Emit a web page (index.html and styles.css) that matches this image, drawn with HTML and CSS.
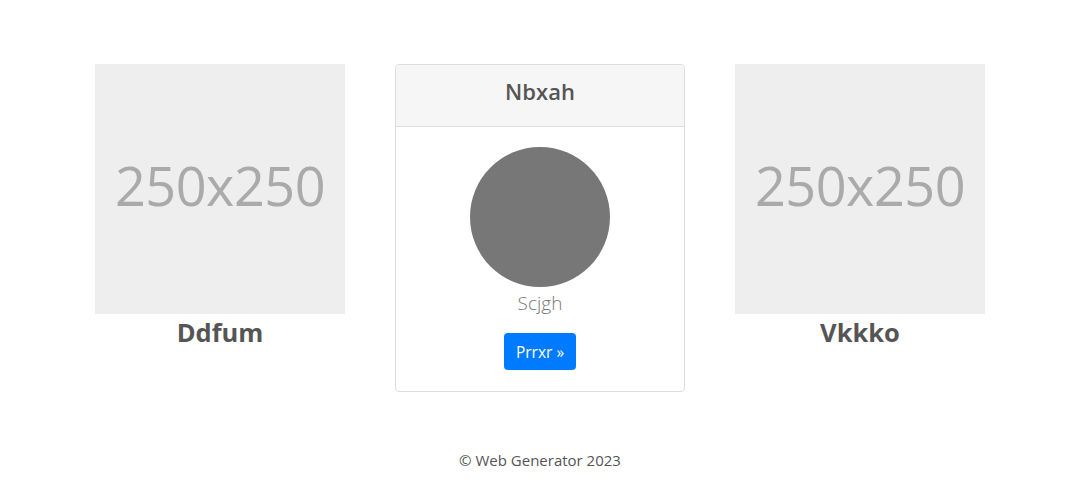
FILE: index.html
```html
<!DOCTYPE html>
<html>
<head>
<meta charset="utf-8">
<link rel="stylesheet" href="styles.css">
</head>
<body>
<main class="container">
  <div class="col">
    <div class="placeholder">250x250</div>
    <h2 class="name">Ddfum</h2>
  </div>
  <div class="col">
    <div class="card">
      <div class="card-header">Nbxah</div>
      <div class="card-body">
        <div class="avatar"></div>
        <p class="subtitle">Scjgh</p>
        <a class="btn">Prrxr »</a>
      </div>
    </div>
  </div>
  <div class="col">
    <div class="placeholder">250x250</div>
    <h2 class="name">Vkkko</h2>
  </div>
</main>
<footer class="footer">© Web Generator 2023</footer>
</body>
</html>
```

FILE: styles.css
```css
* { box-sizing: border-box; }
body {
  margin: 0;
  font-family: "Open Sans", "Noto Sans", sans-serif;
  color: #555;
  background: #fff;
}
.container {
  width: 960px;
  margin: 0 auto;
  padding-top: 64px;
  display: flex;
  align-items: flex-start;
}
.col {
  width: 320px;
  padding: 0 15px;
  display: flex;
  flex-direction: column;
  align-items: center;
}
.placeholder {
  width: 250px;
  height: 250px;
  background: #eee;
  color: #aaa;
  display: flex;
  align-items: center;
  justify-content: center;
  padding-bottom: 8px;
  font-size: 54px;
  letter-spacing: -0.5px;
}
.name {
  margin: 2px 0 0;
  font-size: 25.5px;
  font-weight: 700;
  line-height: 32px;
  color: #555;
}
.card {
  width: 290px;
  border: 1px solid #ddd;
  border-radius: 4px;
  overflow: hidden;
}
.card-header {
  height: 62px;
  background: #f6f6f6;
  border-bottom: 1px solid #ddd;
  display: flex;
  align-items: center;
  justify-content: center;
  padding-bottom: 9px;
  font-size: 22px;
  font-weight: 600;
  color: #555;
}
.card-body {
  padding: 20px 20px 21px;
  display: flex;
  flex-direction: column;
  align-items: center;
}
.avatar {
  width: 140px;
  height: 140px;
  border-radius: 50%;
  background: #777;
}
.subtitle {
  margin: 3px 0 0;
  font-size: 19px;
  font-weight: 300;
  line-height: 26px;
  color: #777;
}
.btn {
  margin-top: 17px;
  height: 37px;
  padding: 0 12px;
  display: flex;
  align-items: center;
  background: #007bff;
  color: #fff;
  border-radius: 4px;
  font-size: 15.5px;
}
.footer {
  margin-top: 58px;
  text-align: center;
  font-size: 15px;
  color: #555;
}
```
